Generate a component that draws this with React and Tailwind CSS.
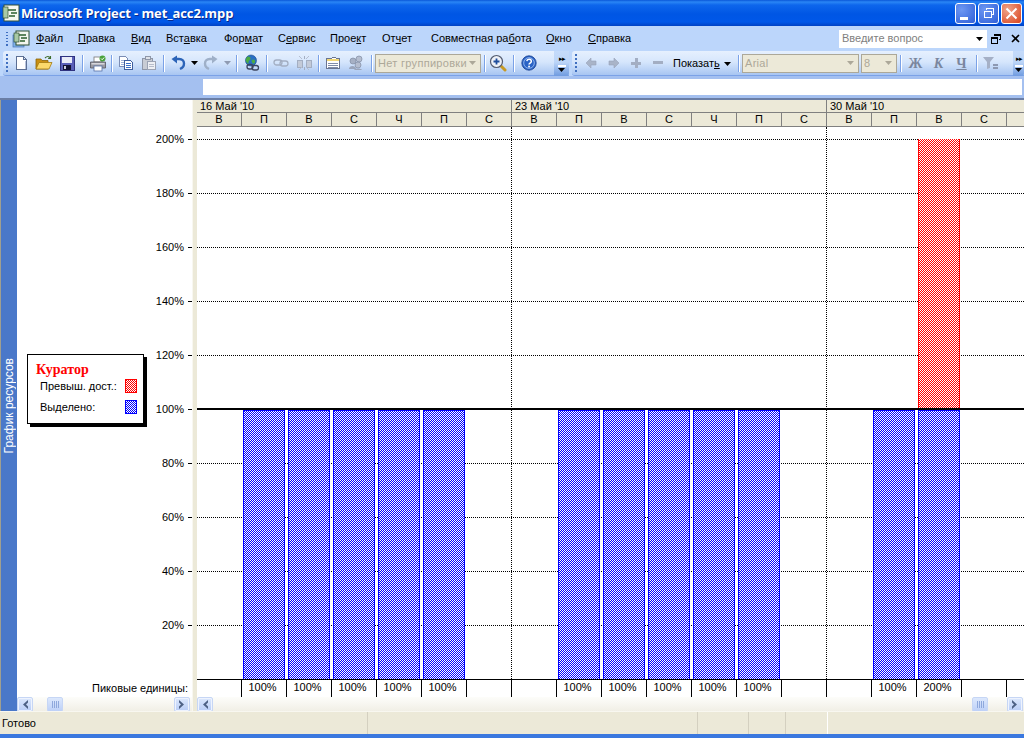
import React from "react";

const Svg = ({ w = 16, h = 16, children, className = "" }) => (
  <svg width={w} height={h} viewBox={`0 0 ${w} ${h}`} className={className} shapeRendering="crispEdges">{children}</svg>
);
const Smooth = ({ w = 16, h = 16, children }) => (
  <svg width={w} height={h} viewBox={`0 0 ${w} ${h}`}>{children}</svg>
);

const NewDoc = () => (<Svg><path d="M3 1.5h7l3 3v10H3z" fill="#fff" stroke="#5c6f94" /><path d="M10 1.5v3h3" fill="#dfe6f4" stroke="#5c6f94" /><path d="M12.5 6v8" stroke="#b8c4dc" /></Svg>);
const Open = () => (
  <Smooth w={18} h={16}>
    <path d="M1 14V4h5l1 1.5h6V14z" fill="#c98f14" stroke="#8a6408" strokeWidth=".8" />
    <path d="M1 14l3-6.5h13L14 14z" fill="#fbd96b" stroke="#a37a10" strokeWidth=".8" />
    <path d="M10 3c2-2 4-2 5.5 0M15.5 1v2.4h-2.4" fill="none" stroke="#3f6c2a" strokeWidth="1.1" />
  </Smooth>
);
const Save = () => (<Svg><rect x="1" y="1" width="14" height="14" fill="#5a5fb8" stroke="#2f3280" /><rect x="3" y="2" width="10" height="6" fill="#e9ecf8" /><rect x="4" y="10" width="8" height="5" fill="#111133" /><rect x="5" y="11" width="2" height="3" fill="#c9cce0" /></Svg>);
const Print = () => (
  <Smooth w={18} h={17}>
    <rect x="5" y="2" width="8" height="5" fill="#fff" stroke="#777" strokeWidth=".8" />
    <path d="M1.5 7h15v6h-15z" fill="#9a9aa2" stroke="#55565f" strokeWidth=".8" />
    <rect x="2.5" y="8" width="13" height="1.5" fill="#d6d6dc" />
    <rect x="5" y="11" width="8" height="5" fill="#fff" stroke="#5571a8" strokeWidth=".8" />
    <circle cx="13.5" cy="3.5" r="3" fill="#4aa23c" />
    <path d="M12 3.5l1.2 1.2 2-2.2" fill="none" stroke="#fff" strokeWidth="1" />
  </Smooth>
);
const Copy = () => (<Svg><path d="M1.5 1.5h6l2 2v8h-8z" fill="#fff" stroke="#7b8db5" /><path d="M3 5h4M3 7h4M3 9h4" stroke="#9fb1d6" /><path d="M6.5 5.5h6l2 2v7h-8z" fill="#fff" stroke="#3f5f9f" /><path d="M8 8h5M8 10h5M8 12h5" stroke="#3a6fc8" /></Svg>);
const Paste = () => (<Svg><rect x="1.5" y="3.5" width="10" height="11" fill="#c8ccd4" stroke="#8f97a8" /><rect x="4" y="1.5" width="5" height="3" fill="#dfe2e8" stroke="#8f97a8" /><rect x="6.5" y="6.5" width="8" height="8" fill="#eef0f4" stroke="#9ba3b4" /><path d="M8 9h5M8 11h5" stroke="#b6bccb" /></Svg>);
const Undo = ({ c = "#2c64b8" }) => (
  <Smooth>
    <path d="M5 4h4c3.5 0 5 2 5 4.5S12.5 13 10 14" fill="none" stroke={c} strokeWidth="2.4" />
    <path d="M7 0.5v8L1.5 4z" fill={c} />
  </Smooth>
);
const Redo = () => (
  <Smooth>
    <path d="M11 4H7C3.5 4 2 6 2 8.5S3.5 13 6 14" fill="none" stroke="#9fb0c8" strokeWidth="2.4" />
    <path d="M9 0.5v8L14.5 4z" fill="#9fb0c8" />
  </Smooth>
);
const Caret = ({ c = "#000" }) => (<Svg w={7} h={4}><path d="M0 0h7L3.5 4z" fill={c} shapeRendering="auto" /></Svg>);
const Globe = () => (
  <Smooth w={18} h={18}>
    <circle cx="8" cy="6.5" r="5.5" fill="#2a6fc4" stroke="#174a8c" strokeWidth=".6" />
    <path d="M5 2.5c2 0 3 1 2.5 2.5S5 7 5.5 9 4 9 3 7.5 3.5 3 5 2.5zM9 6c2-1 3.500 0 3 2s-2 2-2.500 1S8 7 9 6z" fill="#4bab43" />
    <rect x="4" y="10.500" width="6" height="4.500" rx="2.200" fill="none" stroke="#3d4660" strokeWidth="1.300" />
    <rect x="9" y="11.500" width="6.500" height="4.500" rx="2.200" fill="none" stroke="#3d4660" strokeWidth="1.300" />
  </Smooth>
);
const LinkI = () => (
  <Smooth>
    <rect x="1" y="5" width="8" height="5" rx="2.500" fill="none" stroke="#a3aec2" strokeWidth="1.300" />
    <rect x="7" y="6" width="8" height="5" rx="2.500" fill="none" stroke="#a3aec2" strokeWidth="1.300" />
  </Smooth>
);
const Unlink = () => (<Svg><rect x="1" y="5" width="5" height="7" fill="#c3cad8" stroke="#a3aec2" /><rect x="10" y="5" width="5" height="7" fill="#c3cad8" stroke="#a3aec2" /><path d="M8 1v3M8 12v3" stroke="#a3aec2" /><path d="M3 1l3 3M13 1l-3 3M3 15l3-3M13 15l-3-3" stroke="#b5bed0" shapeRendering="auto" /></Svg>);
const Info = () => (<Svg><path d="M1.500 3.500h5l1 -1.500h3l1 1.500h3v10h-13z" fill="#fff" stroke="#6a7590" /><rect x="2" y="4" width="12" height="2" fill="#f2d774" /><path d="M3 8h10M3 10h10M3 12h10" stroke="#7f8ca8" /></Svg>);
const Group = () => (
  <Smooth>
    <circle cx="5" cy="6" r="3" fill="#a6b0c4" stroke="#818ca4" strokeWidth=".7" />
    <circle cx="11" cy="4" r="3" fill="#b5bed0" stroke="#818ca4" strokeWidth=".7" />
    <circle cx="10" cy="10" r="3" fill="#b5bed0" stroke="#818ca4" strokeWidth=".7" />
    <path d="M1 14c0-4 7-4 7 0zM6 15c1-2 7-2 8 0z" fill="#9aa5bb" />
  </Smooth>
);
const Zoom = () => (
  <Smooth w={18} h={18}>
    <path d="M11 11l5 5" stroke="#c79a25" strokeWidth="3" strokeLinecap="round" />
    <circle cx="7.500" cy="7.500" r="6" fill="#eef2f8" stroke="#545c70" strokeWidth="1.200" />
    <path d="M4.500 7.500h6M7.500 4.500v6" stroke="#1f4d9c" strokeWidth="1.800" />
  </Smooth>
);
const Help = () => (
  <Smooth w={16} h={16}>
    <circle cx="8" cy="8" r="7.200" fill="#2a63c6" stroke="#173f8f" strokeWidth=".8" />
    <circle cx="8" cy="8" r="5.300" fill="none" stroke="#a9c8f5" strokeWidth=".8" />
    <path d="M5.800 6.200c.3-2.600 4.600-2.400 4.500.2 0 1.700-2.300 1.700-2.300 3.200" fill="none" stroke="#fff" strokeWidth="1.500" />
    <rect x="7.200" y="10.700" width="1.700" height="1.700" fill="#fff" />
  </Smooth>
);
const ArrowL = () => (<Smooth w={12} h={12}><path d="M6 1v3h5v4H6v3L1 6z" fill="#a9b4c8" stroke="#98a3b8" strokeWidth=".6" /></Smooth>);
const ArrowR = () => (<Smooth w={12} h={12}><path d="M6 1v3H1v4h5v3l5-5z" fill="#a9b4c8" stroke="#98a3b8" strokeWidth=".6" /></Smooth>);
const Plus = () => (<Svg w={10} h={10}><path d="M3.500 0h3v3.500H10v3H6.500V10h-3V6.500H0v-3h3.500z" fill="#a3aec3" /></Svg>);
const Minus = () => (<Svg w={10} h={10}><rect x="0" y="3" width="10" height="3" fill="#a3aec3" /></Svg>);
const Filter = () => (<Svg><path d="M0 2h11L7 7v6l-3 1V7z" fill="#a5b0c6" shapeRendering="auto" /><path d="M10 9h5v1.500h-5zM10 12h5v1.500h-5z" fill="#8d99b2" /></Svg>);
const AppIcon = () => (
  <Smooth w={18} h={18}>
    <rect x="2" y="1" width="15" height="16" fill="#f6f8f0" stroke="#355236" strokeWidth="1" />
    <rect x="1" y="3" width="5" height="11" fill="#a9c9a5" stroke="#355236" strokeWidth=".7" />
    <path d="M6 6h8M9 9h6M7 12h6" stroke="#2d5f2e" strokeWidth="1.600" />
  </Smooth>
);
const MenuIcon = () => (
  <Smooth w={18} h={18}>
    <rect x="1" y="5" width="11" height="12" fill="#7eb0e8" stroke="#4a74b4" strokeWidth=".7" />
    <rect x="4" y="1" width="13" height="14" fill="#f4f6ef" stroke="#2f4f33" strokeWidth="1" />
    <rect x="2" y="3" width="5" height="9" fill="#a9c9a5" stroke="#2f4f33" strokeWidth=".7" />
    <path d="M7 5h7M9 8h6M8 11h5" stroke="#2d5f2e" strokeWidth="1.400" />
  </Smooth>
);

const Grip = ({ x = "" }) => (
  <div className={`flex flex-col gap-[2px] shrink-0 ${x}`}>
    {[0, 1, 2, 3, 4].map((i) => (<div key={i} className="w-[2px] h-[2px] bg-[#3f6fc0]" />))}
  </div>
);
const Sep = ({ w = 6 }) => (
  <div className="flex justify-center shrink-0" style={{ width: w }}>
    <div className="w-[1px] h-[17px] bg-[#7ba2e7] shadow-[1px_0_0_#fff]" />
  </div>
);
const Btn = ({ w = 23, children }) => (
  <div className="h-[22px] flex items-center justify-center shrink-0" style={{ width: w }}>{children}</div>
);
const Combo = ({ w, text, tx = 2 }) => (
  <div className="h-[19px] border border-[#aca899] bg-[#ece9d8] flex items-center justify-between shrink-0 overflow-hidden whitespace-nowrap text-[#aca899] text-[11px] tracking-[0.3px]" style={{ width: w, paddingLeft: tx }}>
    <span>{text}</span>
    <span className="mr-[4px]"><Caret c="#aca899" /></span>
  </div>
);
const Overflow = ({ w }) => (
  <div className="h-[25px] rounded-br-[3px] bg-[linear-gradient(#c5dbfa,#bcd5f8_45%,#6f9be0)] flex flex-col items-center pt-[4px] shrink-0" style={{ width: w }}>
    <div className="text-[7px] leading-[7px] text-black tracking-[-1px]">▸▸</div>
    <div className="w-[8px] h-[2px] bg-white mt-[3px]" />
    <div className="mt-[1px]"><Caret /></div>
  </div>
);

const menus = [
  ["", "Ф", "айл", 42],
  ["", "П", "равка", 53],
  ["", "В", "ид", 35],
  ["Вст", "а", "вка", 58],
  ["Фор", "м", "ат", 54],
  ["С", "е", "рвис", 52],
  ["Прое", "к", "т", 52],
  ["От", "ч", "ет", 49],
  ["Совместная ра", "б", "ота", 115],
  ["", "О", "кно", 42],
  ["", "С", "правка", 50],
];

const days = ["В", "П", "В", "С", "Ч", "П", "С"];
const cols = [0, 1, 1, 1, 1, 1, 0, 0, 1, 1, 1, 1, 1, 0, 0, 1, 2, 0, 0];
const yLabels = ["200%", "180%", "160%", "140%", "120%", "100%", "80%", "60%", "40%", "20%"];

const checkBlue = "bg-[repeating-conic-gradient(#0000ff_0_25%,#ffffff_0_50%)] bg-[length:2px_2px] bg-fixed";
const checkRed = "bg-[repeating-conic-gradient(#ff0000_0_25%,#ffffff_0_50%)] bg-[length:2px_2px] bg-fixed";
const swatchBlue = "bg-[repeating-conic-gradient(#0000ff_0_25%,#ffffff_0_50%)] bg-[length:2px_2px]";
const swatchRed = "bg-[repeating-conic-gradient(#ff0000_0_25%,#ffffff_0_50%)] bg-[length:2px_2px] bg-[position:1px_0]";

const Chevron = ({ right }) => (
  <svg width="8" height="9" viewBox="0 0 8 9">
    <path d={right ? "M1 0l5 4.500-5 4.500V6.500L3 4.500 1 2.500z" : "M7 0L2 4.500 7 9V6.500L5 4.500 7 2.500z"} fill="#4d6185" />
  </svg>
);
const ScrollBtn = ({ right }) => (
  <div className="w-[16px] h-[15px] rounded-[2px] border border-[#c6d6f5] bg-[linear-gradient(#dce8fd,#b9cdf6)] flex items-center justify-center shrink-0 shadow-[inset_0_0_0_1px_#eef3fe]">
    <Chevron right={right} />
  </div>
);
const Thumb = () => (
  <div className="w-[16px] h-[15px] rounded-[2px] border border-[#c6d6f5] bg-[linear-gradient(#dce8fd,#bdd0f7)] flex items-center justify-center gap-[1px] shrink-0">
    {[0, 1, 2, 3].map((i) => (<div key={i} className="w-[1px] h-[7px] bg-[#8ea8dc]" />))}
  </div>
);
const scrollBg = "h-[14px] bg-[linear-gradient(#fdfdfa,#f1efe6)] flex items-start overflow-hidden";

export default function App() {
  return (
    <div className="w-[1024px] h-[738px] overflow-hidden flex flex-col bg-[#ece9d8] text-black text-[11px] font-['Liberation_Sans',Arial,sans-serif]">
      {/* Title bar */}
      <div className="h-[26px] shrink-0 flex items-center bg-[linear-gradient(#0a57d8_0px,#2a86f5_2px,#0e66ec_5px,#0056e4_14px,#0057e8_22px,#0042c4_26px)]">
        <div className="ml-[2px] mr-[1px] flex"><AppIcon /></div>
        <span className="text-white font-bold text-[13px] leading-none font-['Open_Sans',sans-serif] tracking-[-0.1px] [text-shadow:1px_1px_0_#0a2a8a]">Microsoft Project - met_acc2.mpp</span>
        <div className="ml-auto mr-[2px] flex gap-[2px]">
          <div className="w-[21px] h-[21px] rounded-[3px] border border-white bg-[radial-gradient(circle_at_30%_30%,#6d97f2,#2f5fd8)] relative flex items-end pl-[4px] pb-[3px]">
            <div className="w-[8px] h-[3px] bg-white" />
          </div>
          <div className="w-[21px] h-[21px] rounded-[3px] border border-white bg-[radial-gradient(circle_at_30%_30%,#6d97f2,#2f5fd8)] flex items-center justify-center">
            <svg width="12" height="12" viewBox="0 0 12 12" shapeRendering="crispEdges"><path d="M3.500 3V1.500h7v6H8.500" fill="none" stroke="#fff" /><rect x="1.500" y="4.500" width="6.500" height="6" fill="none" stroke="#fff" /><path d="M3 1.500h8M1 4.500h7" stroke="#fff" /></svg>
          </div>
          <div className="w-[21px] h-[21px] rounded-[3px] border border-white bg-[radial-gradient(circle_at_30%_30%,#f0a48a,#d9431c)] flex items-center justify-center">
            <svg width="13" height="13" viewBox="0 0 13 13"><path d="M1.500 1.500l10 10M11.500 1.500l-10 10" stroke="#fff" strokeWidth="2" /></svg>
          </div>
        </div>
      </div>

      {/* Menu bar */}
      <div className="h-[25px] shrink-0 bg-[#bcd6fb] flex items-center pl-[6px] text-[11px]">
        <Grip x="h-[14px] overflow-hidden" />
        <div className="ml-[4px] mr-[6px] flex"><MenuIcon /></div>
        {menus.map(([a, u, b, w], i) => (
          <div key={i} className="shrink-0 whitespace-nowrap" style={{ width: w }}>
            {a}<span className="underline">{u}</span>{b}
          </div>
        ))}
        <div className="ml-[201px] w-[148px] h-[18px] bg-white flex items-center justify-between pl-[3px] text-[#7f7f7f] shrink-0">
          <span>Введите вопрос</span>
          <span className="mr-[4px]"><Caret /></span>
        </div>
        <div className="ml-[4px] w-[10px] flex items-center justify-center">
          <svg width="10" height="10" viewBox="0 0 10 10" shapeRendering="crispEdges"><path d="M3.500 2V.5h6v5H8" fill="none" stroke="#000" /><rect x=".5" y="3.500" width="6" height="6" fill="none" stroke="#000" /><path d="M3 1h7M0 4.500h7" stroke="#000" strokeWidth="1.500" /></svg>
        </div>
        <div className="ml-[9px] w-[10px] flex items-center justify-center">
          <svg width="9" height="9" viewBox="0 0 9 9"><path d="M1 1l7 7M8 1L1 8" stroke="#000" strokeWidth="1.600" /></svg>
        </div>
      </div>

      {/* Toolbars */}
      <div className="h-[25px] shrink-0 bg-[#bcd6fb] flex pl-[3px]">
        <div className="w-[566px] h-[25px] rounded-l-[3px] border-b border-[#7ba2e7] bg-[linear-gradient(#e6f0fe,#d6e6fc_45%,#a8c5f2)] flex items-center shrink-0">
          <Grip x="ml-[3px] mr-[1px]" />
          <Btn><NewDoc /></Btn>
          <Btn><Open /></Btn>
          <Btn><Save /></Btn>
          <Sep w={8} />
          <Btn><Print /></Btn>
          <Sep w={5} />
          <Btn><Copy /></Btn>
          <Btn><Paste /></Btn>
          <Sep />
          <Btn><Undo /></Btn>
          <Btn w={10}><Caret /></Btn>
          <Btn><Redo /></Btn>
          <Btn w={11}><Caret c="#8f9bb2" /></Btn>
          <Sep w={7} />
          <Btn><Globe /></Btn>
          <Sep />
          <Btn><LinkI /></Btn>
          <Btn><Unlink /></Btn>
          <Sep />
          <Btn><Info /></Btn>
          <Btn><Group /></Btn>
          <Sep w={8} />
          <Combo w={106} text="Нет группировки" />
          <Sep w={6} />
          <Btn w={21}><Zoom /></Btn>
          <Sep w={10} />
          <Btn w={21}><Help /></Btn>
          <div className="ml-auto"><Overflow w={15} /></div>
        </div>
        <div className="ml-[3px] flex-1 h-[25px] rounded-l-[3px] border-b border-[#7ba2e7] bg-[linear-gradient(#e6f0fe,#d6e6fc_45%,#a8c5f2)] flex items-center">
          <Grip x="ml-[3px] mr-[2px]" />
          <Btn><ArrowL /></Btn>
          <Btn><ArrowR /></Btn>
          <Btn w={22}><Plus /></Btn>
          <Btn w={22}><Minus /></Btn>
          <div className="ml-[4px] w-[61px] whitespace-nowrap shrink-0">Показат<span className="underline">ь</span> <span className="inline-block align-middle ml-[1px]"><Caret /></span></div>
          <Sep w={8} />
          <Combo w={117} text="Arial" />
          <div className="w-[2px] shrink-0" />
          <Combo w={36} text="8" />
          <Sep w={7} />
          <div className="w-[23px] text-center text-[14px] font-bold font-['Liberation_Serif',serif] text-[#7a869e] shrink-0">Ж</div>
          <div className="w-[23px] text-center text-[14px] font-bold italic font-['Liberation_Serif',serif] text-[#7a869e] shrink-0">К</div>
          <div className="w-[23px] text-center text-[14px] font-bold underline font-['Liberation_Serif',serif] text-[#7a869e] shrink-0">Ч</div>
          <Sep w={6} />
          <Btn><Filter /></Btn>
          <div className="ml-auto"><Overflow w={11} /></div>
        </div>
      </div>

      {/* Entry bar */}
      <div className="h-[22px] shrink-0 bg-[#a4c0f0] pl-[203px] pr-[2px] pt-[3px]">
        <div className="h-[16px] bg-white" />
      </div>

      {/* Main */}
      <div className="h-[613px] shrink-0 flex border-t-2 border-[#6a7ea6] bg-[#ece9d8]">
        <div className="w-[1px] bg-[#a09f90] shrink-0" />
        <div className="w-[16px] shrink-0 bg-[#4a78c9] flex items-center justify-center text-white text-[12px]">
          <span className="[writing-mode:vertical-rl] rotate-180 whitespace-nowrap">График ресурсов</span>
        </div>

        {/* Left pane */}
        <div className="w-[175px] shrink-0 flex flex-col bg-white relative">
          <div className="flex-1 pt-[12px]">
            {yLabels.map((l) => (
              <div key={l} className="h-[54px] flex items-center justify-end">
                <span>{l}</span>
                <span className="ml-[4px] w-[4px] h-[1px] bg-black" />
              </div>
            ))}
          </div>
          <div className="h-[17px] flex items-center justify-end pr-[4px]">Пиковые единицы:</div>
          <div className={`${scrollBg} w-full`}>
            <ScrollBtn />
            <div className="ml-[14px]"><Thumb /></div>
            <div className="ml-auto mr-[2px]"><ScrollBtn right /></div>
          </div>

          {/* Legend */}
          <div className="absolute left-[10px] top-[254px] w-[117px] h-[70px] bg-white border border-black shadow-[3px_3px_0_#000] pl-[8px] pt-[7px]">
            <div className="font-['Liberation_Serif',serif] font-bold text-[14px] leading-[16px] text-[#ff0000]">Куратор</div>
            <div className="flex items-center h-[14px] mt-[1px] pl-[4px]">
              <span className="w-[85px]">Превыш. дост.:</span>
              <div className={`w-[12px] h-[14px] border border-[#ff0000] ${swatchRed}`} />
            </div>
            <div className="flex items-center h-[14px] mt-[7px] pl-[4px]">
              <span className="w-[85px]">Выделено:</span>
              <div className={`w-[12px] h-[14px] border border-[#0000ff] ${swatchBlue}`} />
            </div>
          </div>
        </div>

        {/* Splitter */}
        <div className="w-[5px] shrink-0 bg-[#ece9d8] border-l border-[#f8f7f0]" />

        {/* Chart pane */}
        <div className="flex-1 min-w-0 flex flex-col overflow-hidden bg-white">
          {/* Timescale */}
          <div className="h-[27px] shrink-0 bg-[#ece9d8] border-b border-[#808080]">
            <div className="h-[13px] flex border-b border-[#808080]">
              {["16 Май '10", "23 Май '10", "30 Май '10"].map((d) => (
                <div key={d} className="w-[315px] shrink-0 border-r border-[#808080] pl-[3px] leading-[13px] whitespace-nowrap">{d}</div>
              ))}
            </div>
            <div className="h-[13px] flex">
              {cols.map((_, i) => (
                <div key={i} className="w-[45px] shrink-0 border-r border-[#808080] text-center leading-[13px]">{i < 18 ? days[i % 7] : ""}</div>
              ))}
            </div>
          </div>

          {/* Plot */}
          <div className="h-[552px] shrink-0 relative">
            <div className="absolute inset-0 pt-[12px]">
              {[0, 1, 2, 3, 4, 5, 6, 7, 8, 9].map((i) => (
                <div key={i} className="h-[54px] border-t border-dotted border-black" />
              ))}
            </div>
            <div className="absolute inset-0 flex">
              {[0, 1].map((i) => (
                <div key={i} className="w-[315px] shrink-0 border-r border-dotted border-black" />
              ))}
            </div>
            <div className="absolute inset-0 flex">
              {cols.map((v, i) => (
                <div key={i} className="w-[45px] h-[552px] shrink-0 flex flex-col justify-end pl-[1px]">
                  {v === 2 && <div className={`w-[42px] h-[269px] border-x border-[#ff0000] mb-[2px] ${checkRed}`} />}
                  {v > 0 && <div className={`w-[42px] h-[269px] border-x border-t border-[#0000ff] ${checkBlue}`} />}
                </div>
              ))}
            </div>
            <div className="absolute left-0 right-0 top-[281px] h-[2px] bg-black" />
          </div>

          {/* Peak units */}
          <div className="h-[18px] shrink-0 border-t border-black flex bg-white">
            {cols.map((v, i) => (
              <div key={i} className="w-[45px] shrink-0 border-r border-black text-center leading-[15px] pr-[3px]">
                {v === 1 ? "100%" : v === 2 ? "200%" : ""}
              </div>
            ))}
          </div>

          {/* Scrollbar */}
          <div className={`${scrollBg} shrink-0`}>
            <ScrollBtn />
            <div className="ml-auto mr-[19px]"><Thumb /></div>
            <div className="mr-[1px]"><ScrollBtn right /></div>
          </div>
        </div>
      </div>

      {/* Status bar */}
      <div className="h-[23px] shrink-0 bg-[#ece9d8] flex items-center border-t border-[#f8f7f0] pl-[2px]">
        <div className="w-[366px] h-full flex items-center border-r border-[#d4d0c0]">Готово</div>
        <div className="w-[330px] h-full border-r border-[#d4d0c0]" />
        <div className="w-[51px] h-full border-r border-[#d4d0c0]" />
        <div className="w-[37px] h-full border-r border-[#d4d0c0]" />
        <div className="w-[42px] h-full border-r border-white" />
      </div>
      <div className="h-[4px] shrink-0 bg-[#3a78df]" />
    </div>
  );
}
